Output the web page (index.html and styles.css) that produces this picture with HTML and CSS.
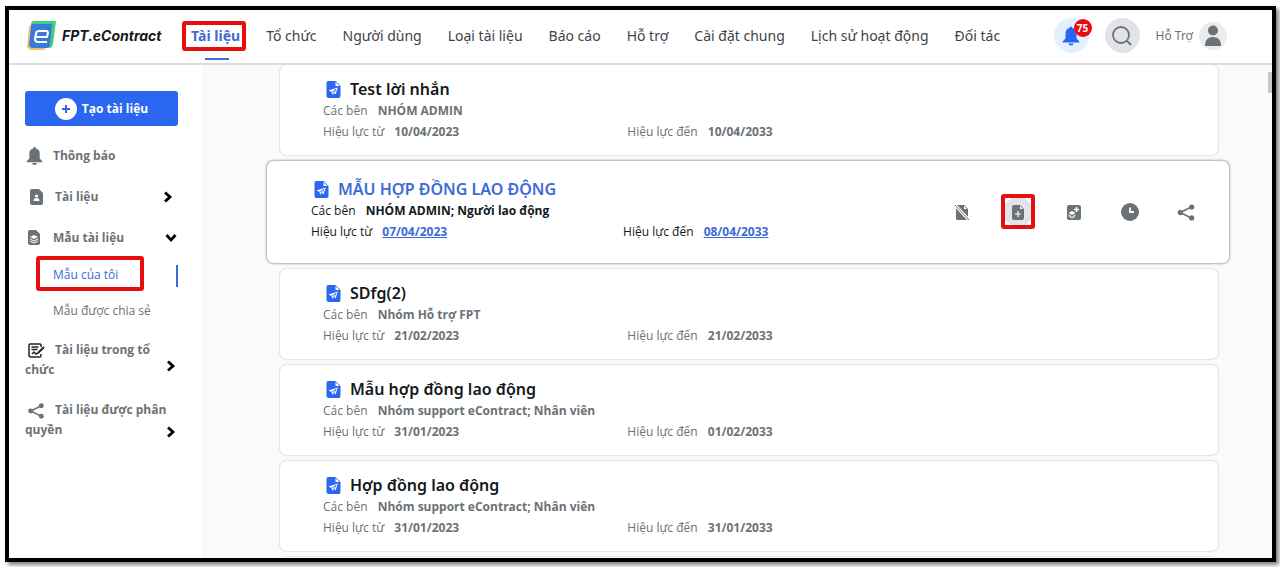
FILE: index.html
```html
<!DOCTYPE html>
<html lang="vi">
<head>
<meta charset="utf-8">
<meta name="viewport" content="width=device-width, initial-scale=1">
<title>FPT.eContract</title>
<link rel="stylesheet" href="styles.css">
</head>
<body>
<svg class="sprite" aria-hidden="true">
  <symbol id="file-send" viewBox="0 0 14 17">
    <path fill="#2b66f0" d="M2 0h7l5 5v10a2 2 0 0 1-2 2H2a2 2 0 0 1-2-2V2a2 2 0 0 1 2-2z"/>
    <path fill="#fff" d="M9 1v4h4zM11.300 6.500 2 9.500l3 1.500.8 3.500 1.600-2.200 1.800 1z"/>
    <path stroke="#2b66f0" stroke-width=".8" d="M5.200 11 9.500 8.200M5.800 13.800 9.800 8.500" fill="none"/>
  </symbol>
  <symbol id="share" viewBox="0 0 18 18">
    <path d="M15 3 3 9l12 6" fill="none" stroke="currentColor" stroke-width="1.800"/>
    <circle cx="15" cy="3.200" r="2.800" fill="currentColor"/><circle cx="3" cy="9" r="2.800" fill="currentColor"/><circle cx="15" cy="14.800" r="2.800" fill="currentColor"/>
  </symbol>
  <symbol id="chevron" viewBox="0 0 10 12">
    <path d="M2 1.500 7 6l-5 4.500" fill="none" stroke="#000" stroke-width="2.800"/>
  </symbol>
  <symbol id="bell" viewBox="0 0 18 19">
    <path fill="currentColor" d="M9 0a1.500 1.500 0 0 1 1.500 1.500A5.500 5.500 0 0 1 14.500 7v4.500c0 1.500 3 2.500 3 4.500H.5c0-2 3-3 3-4.500V7a5.500 5.500 0 0 1 4-5.500A1.500 1.500 0 0 1 9 0zM6.500 17h5a2.500 2 0 0 1-5 0z"/>
  </symbol>
</svg>
<div class="frame">
  <header class="topbar">
    <a class="brand" href="#">
      <svg width="29" height="30" viewBox="0 0 29 30" aria-hidden="true">
        <path fill="#f3bd68" d="M4 4h17l-2 22q-1 3-4 3H3L0 26 2 7q0-3 2-3z"/>
        <path fill="#3fd07c" d="M7 0h22l-3 23q-1 4-4 4H5L4 4q0-4 3-4z"/>
        <path fill="#3b78dc" d="M6 3h19l-2 20q0 4-4 4H6q-4 0-4-4L4 6q0-3 2-3z"/>
        <path fill="none" stroke="#fff" stroke-width="2" stroke-linejoin="round" d="M8 16h12l1-4q0-2-2-2h-7q-3 0-3 3l-1 5q0 3 3 3h9"/>
      </svg>
      <span>FPT.eContract</span>
    </a>
    <nav class="mainnav">
      <a class="active marked" href="#">Tài liệu</a>
      <a href="#">Tổ chức</a>
      <a href="#">Người dùng</a>
      <a href="#">Loại tài liệu</a>
      <a href="#">Báo cáo</a>
      <a href="#">Hỗ trợ</a>
      <a href="#">Cài đặt chung</a>
      <a href="#">Lịch sử hoạt động</a>
      <a href="#">Đối tác</a>
    </nav>
    <div class="tools">
      <button class="round notify" aria-label="Thông báo"><svg width="18" height="20"><use href="#bell"/></svg><span class="badge">75</span></button>
      <button class="round search" aria-label="Tìm kiếm"><svg width="20" height="20" viewBox="0 0 20 20" fill="none" stroke="currentColor" stroke-width="1.800"><circle cx="9" cy="9" r="8"/><path d="m15 15 4 4"/></svg></button>
      <button class="user">Hỗ Trợ
        <svg width="28" height="28" viewBox="0 0 28 28" aria-hidden="true"><circle cx="14" cy="14" r="14" fill="#ebecee"/><circle cx="14" cy="8.500" r="5" fill="#6b7277"/><path fill="#6b7277" d="M6 24c0-6 3-9 8-9s8 3 8 9z"/></svg>
      </button>
    </div>
  </header>
  <div class="body">
    <aside class="sidebar">
      <button class="create"><svg width="22" height="22" viewBox="0 0 22 22" aria-hidden="true"><circle cx="11" cy="11" r="11" fill="#fff"/><path d="M11 7v8M7 11h8" stroke="#2b66f0" stroke-width="2"/></svg>Tạo tài liệu</button>
      <nav class="sidenav">
        <a class="item" href="#"><span class="slot"><svg width="17" height="18"><use href="#bell"/></svg></span><span class="label">Thông báo</span></a>
        <a class="item" href="#"><span class="slot wide"><svg width="13" height="16" viewBox="0 0 13 16"><path fill="currentColor" d="M2 0h7l4 4v10a2 2 0 0 1-2 2H2a2 2 0 0 1-2-2V2a2 2 0 0 1 2-2z"/><circle cx="6.500" cy="7" r="1.600" fill="#fff"/><path fill="#fff" d="M3.500 12c0-2 1-3 3-3s3 1 3 3z"/></svg></span><span class="label">Tài liệu</span><svg class="chev" width="10" height="12"><use href="#chevron"/></svg></a>
        <a class="item" href="#"><span class="slot"><svg width="12" height="15" viewBox="0 0 12 15"><path fill="currentColor" d="M2 0h6l4 4v9a2 2 0 0 1-2 2H2a2 2 0 0 1-2-2V2a2 2 0 0 1 2-2z"/><path fill="#fff" d="m6 5 4 2-4 2-4-2zM2 8.500l4 2 4-2v1l-4 2-4-2zM2 10.500l4 2 4-2v1l-4 2-4-2z"/></svg></span><span class="label">Mẫu tài liệu</span><svg class="chev down" width="10" height="12"><use href="#chevron"/></svg></a>
        <a class="sub current marked" href="#">Mẫu của tôi</a>
        <a class="sub" href="#">Mẫu được chia sẻ</a>
        <a class="item tall" href="#"><span class="label"><span class="slot wide"><svg width="17" height="16" viewBox="0 0 17 16" fill="none" stroke="#222" stroke-width="1.500"><path d="M13 4V2q0-1-1-1H2Q1 1 1 2v10q0 2 2 2h9q1 0 1-2v-1M3.500 4h7M3.500 6.500h6M4 11l2-2 2 2 2-1"/><path d="m10 10 6-6" stroke-width="2"/></svg></span>Tài liệu trong tổ chức</span><svg class="chev" width="10" height="12"><use href="#chevron"/></svg></a>
        <a class="item tall" href="#"><span class="label"><span class="slot wide"><svg width="16" height="16"><use href="#share"/></svg></span>Tài liệu được phân quyền</span><svg class="chev" width="10" height="12"><use href="#chevron"/></svg></a>
      </nav>
    </aside>
    <main class="content">
      <ul class="list">
        <li class="card">
          <h2><svg width="15" height="17"><use href="#file-send"/></svg>Test lời nhắn</h2>
          <p>Các bên <b>NHÓM ADMIN</b></p>
          <div class="dates"><p>Hiệu lực từ <b>10/04/2023</b></p><p>Hiệu lực đến <b>10/04/2033</b></p></div>
        </li>
        <li class="card selected">
          <h2><svg width="15" height="17"><use href="#file-send"/></svg>MẪU HỢP ĐỒNG LAO ĐỘNG</h2>
          <p>Các bên <b>NHÓM ADMIN; Người lao động</b></p>
          <div class="dates"><p>Hiệu lực từ <b>07/04/2023</b></p><p>Hiệu lực đến <b>08/04/2033</b></p></div>
          <div class="actions">
            <button aria-label="Ngừng sử dụng"><svg width="14" height="15" viewBox="0 0 14 15"><path fill="currentColor" d="M2 0h7l4 4v9a2 2 0 0 1-1 2H2a2 2 0 0 1-1-2V1z"/><path fill="#fff" d="M9 1v3h3z"/><path d="m0 0 14 15" stroke="#fff" stroke-width="3"/><path d="m0 0 14 15" stroke="currentColor"/></svg></button>
            <button class="marked focus" aria-label="Tạo từ mẫu"><svg width="12" height="15" viewBox="0 0 12 15"><path fill="currentColor" d="M2 0h6l4 4v9a2 2 0 0 1-2 2H2a2 2 0 0 1-2-2V2a2 2 0 0 1 2-2z"/><path fill="#fff" d="M8 1v3h3z"/><path d="M6 6v6M3 9h6" stroke="#fff" stroke-width="1.200"/></svg></button>
            <button aria-label="Thêm mẫu"><svg width="14" height="15" viewBox="0 0 14 15"><rect width="14" height="15" rx="2" fill="currentColor"/><path d="M9.500 2v5M7 4.500h5" stroke="#fff" stroke-width="1.500"/><path fill="#fff" d="m5 6 3.500 2L5 10 1.500 8zM1.500 9.500l3.500 2 3.500-2v1l-3.500 2-3.500-2zM1.500 11.500l3.500 2 3.500-2"/></svg></button>
            <button aria-label="Lịch sử"><svg width="18" height="18" viewBox="0 0 18 18"><circle cx="9" cy="9" r="9" fill="currentColor"/><path d="M9 4.500V9h4" fill="none" stroke="#fff" stroke-width="1.800"/></svg></button>
            <button aria-label="Chia sẻ"><svg width="18" height="17"><use href="#share"/></svg></button>
          </div>
        </li>
        <li class="card">
          <h2><svg width="15" height="17"><use href="#file-send"/></svg>SDfg(2)</h2>
          <p>Các bên <b>Nhóm Hỗ trợ FPT</b></p>
          <div class="dates"><p>Hiệu lực từ <b>21/02/2023</b></p><p>Hiệu lực đến <b>21/02/2033</b></p></div>
        </li>
        <li class="card">
          <h2><svg width="15" height="17"><use href="#file-send"/></svg>Mẫu hợp đồng lao động</h2>
          <p>Các bên <b>Nhóm support eContract; Nhân viên</b></p>
          <div class="dates"><p>Hiệu lực từ <b>31/01/2023</b></p><p>Hiệu lực đến <b>01/02/2033</b></p></div>
        </li>
        <li class="card">
          <h2><svg width="15" height="17"><use href="#file-send"/></svg>Hợp đồng lao động</h2>
          <p>Các bên <b>Nhóm support eContract; Nhân viên</b></p>
          <div class="dates"><p>Hiệu lực từ <b>31/01/2023</b></p><p>Hiệu lực đến <b>31/01/2033</b></p></div>
        </li>
        <li class="card"></li>
      </ul>
      <div class="thumb"></div>
    </main>
  </div>
</div>
</body>
</html>
```
FILE: styles.css
```css
* { box-sizing: border-box; }
body {
  margin: 0;
  height: 100vh;
  padding: 6px 4px 5px 5px;
  background: #fff;
  font: 12px/20px "Open Sans", "Noto Sans", sans-serif;
  color: #6b7277;
  overflow: hidden;
}
a { color: inherit; text-decoration: none; }
button { border: 0; padding: 0; background: none; font: inherit; color: inherit; }
svg { flex: none; }
.sprite { position: absolute; width: 0; height: 0; }

.frame {
  display: flex;
  flex-direction: column;
  height: 100%;
  border: 4px solid #000;
  box-shadow: 3px 3px 4px rgba(0, 0, 0, .5);
  overflow: hidden;
}

.topbar {
  display: flex;
  align-items: center;
  flex: none;
  height: 55px;
  padding: 0 45px 2px 18px;
  border-bottom: 2px solid #dcdcdc;
  background: #fff;
}
.brand {
  display: flex;
  align-items: center;
  gap: 6px;
  width: 164px;
  font: italic 700 14px/20px Inter, sans-serif;
  color: #15181c;
}
.mainnav {
  display: flex;
  gap: 26px;
  font: 14px/20px "Noto Sans", sans-serif;
  color: #3f4347;
  white-space: nowrap;
}
.mainnav .active { position: relative; font-weight: 700; color: #3b6bd6; }
.mainnav .active::before {
  content: "";
  position: absolute;
  left: 50%;
  bottom: -14px;
  width: 24px;
  height: 2px;
  margin-left: -11px;
  background: #3b6bd6;
}

/* Red outline drawn over the element it points out */
.marked { position: relative; }
.marked::after {
  content: "";
  position: absolute;
  inset: -5px -6px -5px -9px;
  border: 4px solid #e60f0f;
  border-radius: 3px;
}

.tools { display: flex; align-items: center; gap: 16px; margin-left: auto; }
.round {
  position: relative;
  display: grid;
  place-items: center;
  width: 35px;
  height: 35px;
  border-radius: 50%;
}
.notify { background: #e3f0fd; color: #2b66f0; }
.search { background: #e2e3e8; color: #6b7277; }
.badge {
  position: absolute;
  top: 1px;
  right: -3px;
  width: 18px;
  height: 18px;
  border-radius: 50%;
  background: #ea0b12;
  color: #fff;
  font: 700 10px/18px "Open Sans", sans-serif;
  text-align: center;
}
.user { display: flex; align-items: center; gap: 6px; font: 12px/20px "Noto Sans", sans-serif; }

.body { display: flex; flex: 1; min-height: 0; }
.sidebar { flex: none; width: 193px; padding: 26px 24px 0 16px; background: #fff; }
.create {
  display: flex;
  align-items: center;
  justify-content: center;
  gap: 5px;
  width: 100%;
  height: 35px;
  border-radius: 3px;
  background: #2b66f0;
  color: #fff;
  font-weight: 700;
}
.sidenav { display: flex; flex-direction: column; padding-top: 9px; }
.item { display: flex; align-items: center; height: 41px; font-weight: 700; }
.label { flex: 1; }
.slot { display: inline-flex; justify-content: center; width: 18px; margin-right: 10px; }
.slot.wide { width: 22px; margin-right: 8px; vertical-align: middle; }
.chev { margin-right: 5px; }
.chev.down { transform: rotate(90deg); margin-right: 2px; }
.sub { height: 36px; padding-left: 28px; line-height: 34px; }
.sub.current { color: #3b6bd6; }
.sub.current::before {
  content: "";
  position: absolute;
  top: 7px;
  right: 0;
  width: 2px;
  height: 22px;
  background: #3b6bd6;
}
.sub.marked::after { inset: -2px 34px 3px 11px; }
.item.tall { height: auto; padding: 10px 0; align-items: flex-end; }
.item.tall .chev { margin: 0 2px 8px -10px; }
.item.tall:last-child .chev { margin-bottom: 2px; }

.content { position: relative; flex: 1; min-width: 0; background: #fafafa; overflow: hidden; }
.list { display: flex; flex-direction: column; gap: 4px; margin: -1px 0 0; padding: 0 42px 0 64px; list-style: none; }
.card {
  height: 92px;
  margin: 0 11px 0 13px;
  padding: 14px 0 0 43px;
  border: 1px solid #e6e6e6;
  border-radius: 8px;
  background: #fff;
  box-shadow: 0 0 1px #e6e6e6;
}
.card h2 {
  display: flex;
  align-items: center;
  gap: 9px;
  margin: 0;
  padding-left: 3px;
  font: 600 16px/21px "Noto Sans", sans-serif;
  color: #15181c;
}
.card p { margin: 0; line-height: 21px; }
.card b { margin-left: 7px; font-weight: 700; }
.dates { display: grid; grid-template-columns: 34% 1fr; }
.card.selected {
  position: relative;
  height: 104px;
  margin: 0;
  padding: 18px 0 0 44px;
  border: 1px solid #c4c4c4;
  box-shadow: 0 0 2px #aaa;
  color: #15181c;
}
.selected h2 { color: #3b6bd6; }
.selected .dates b { color: #3b6bd6; text-decoration: underline; }
.actions {
  position: absolute;
  top: 36px;
  right: 28px;
  display: flex;
  gap: 26px;
  color: #6b7277;
}
.actions button { display: grid; place-items: center; width: 30px; height: 30px; }
.actions .focus { border-radius: 50%; background: #e3e3ea; }
.actions .marked::after { inset: -3px -2px -2px; }
.thumb { position: absolute; top: 7px; right: 0; width: 4px; height: 21px; background: #c8c8c8; }
```
